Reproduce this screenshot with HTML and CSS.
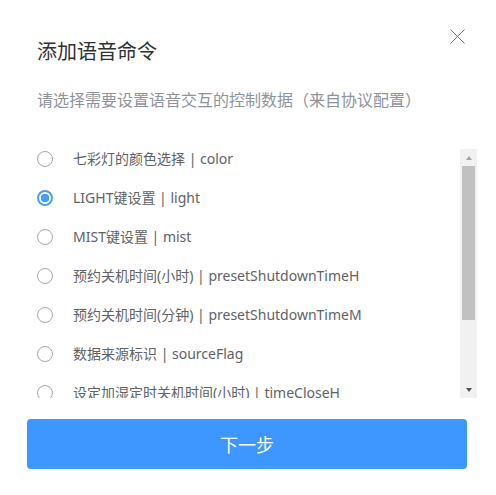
FILE: index.html
```html
<!DOCTYPE html>
<html lang="zh-CN">
<head>
<meta charset="utf-8">
<title>添加语音命令</title>
<link rel="stylesheet" href="styles.css">
</head>
<body>
<div class="dialog">
  <div class="header">
    <div class="title">添加语音命令</div>
    <svg class="close" width="15" height="15" viewBox="0 0 15 15"><path d="M0.5 0.5L14.5 14.5M14.5 0.5L0.5 14.5" stroke="#6b7180" stroke-width="1" fill="none"/></svg>
  </div>
  <div class="subtitle">请选择需要设置语音交互的控制数据（来自协议配置）</div>
  <div class="list-wrap">
    <div class="list">
      <div class="row"><span class="radio"></span><span class="label">七彩灯的颜色选择 | color</span></div>
      <div class="row"><span class="radio checked"></span><span class="label">LIGHT键设置 | light</span></div>
      <div class="row"><span class="radio"></span><span class="label">MIST键设置 | mist</span></div>
      <div class="row"><span class="radio"></span><span class="label">预约关机时间(小时) | presetShutdownTimeH</span></div>
      <div class="row"><span class="radio"></span><span class="label">预约关机时间(分钟) | presetShutdownTimeM</span></div>
      <div class="row"><span class="radio"></span><span class="label">数据来源标识 | sourceFlag</span></div>
      <div class="row"><span class="radio"></span><span class="label">设定加湿定时关机时间(小时) | timeCloseH</span></div>
    </div>
    <div class="scrollbar">
      <div class="sb-btn"><span class="arrow-up"></span></div>
      <div class="sb-thumb"></div>
      <div class="sb-track"></div>
      <div class="sb-btn"><span class="arrow-down"></span></div>
    </div>
  </div>
  <button class="next">下一步</button>
</div>
</body>
</html>
```
FILE: styles.css
```css
html, body {
  margin: 0;
  padding: 0;
  background: #ffffff;
}
body {
  font-family: "Noto Sans CJK SC", "Noto Sans", sans-serif;
}
.dialog {
  width: 496px;
  height: 495px;
  box-sizing: border-box;
}
.header {
  display: flex;
  justify-content: space-between;
  align-items: flex-start;
  padding: 29px 31px 0 37px;
}
.title {
  margin-top: 10px;
  font-size: 20px;
  line-height: 24px;
  color: #303133;
}
.close {
  display: block;
}
.subtitle {
  margin: 25px 0 0 37px;
  font-size: 16px;
  line-height: 22px;
  color: #8e939c;
}
.list-wrap {
  display: flex;
  margin: 39px 19px 0 37px;
  height: 249px;
}
.list {
  flex: 1;
  overflow: hidden;
  display: flex;
  flex-direction: column;
  gap: 21px;
  padding-top: 1px;
}
.row {
  display: flex;
  align-items: center;
  height: 18px;
  flex-shrink: 0;
}
.radio {
  width: 16px;
  height: 16px;
  box-sizing: border-box;
  border: 1px solid #a4a7ab;
  border-radius: 50%;
  flex-shrink: 0;
  margin-top: -1px;
}
.radio.checked {
  border: 2px solid #4a9ff5;
  background: radial-gradient(circle, #4a9ff5 0 4px, #ffffff 4.6px);
}
.label {
  margin-left: 20px;
  font-family: "Noto Sans", "Noto Sans CJK SC", sans-serif;
  font-size: 14px;
  line-height: 18px;
  color: #606266;
  white-space: nowrap;
}
.scrollbar {
  width: 17px;
  background: #f1f1f1;
  display: flex;
  flex-direction: column;
  flex-shrink: 0;
}
.sb-btn {
  height: 17px;
  display: flex;
  align-items: center;
  justify-content: center;
  flex-shrink: 0;
}
.arrow-up {
  width: 0;
  height: 0;
  border-left: 3.5px solid transparent;
  border-right: 3.5px solid transparent;
  border-bottom: 4px solid #a3a3a3;
}
.arrow-down {
  width: 0;
  height: 0;
  border-left: 3.5px solid transparent;
  border-right: 3.5px solid transparent;
  border-top: 4px solid #505050;
}
.sb-thumb {
  height: 154px;
  margin: 0 2px;
  background: #c1c1c1;
  flex-shrink: 0;
}
.sb-track {
  flex: 1;
}
.next {
  display: block;
  margin: 21px 0 0 27px;
  width: 440px;
  height: 50px;
  border: none;
  border-radius: 4px;
  background: #3d97ff;
  color: #ffffff;
  font-family: "Noto Sans CJK SC", sans-serif;
  font-size: 18px;
  line-height: 50px;
  padding: 0;
}
```
